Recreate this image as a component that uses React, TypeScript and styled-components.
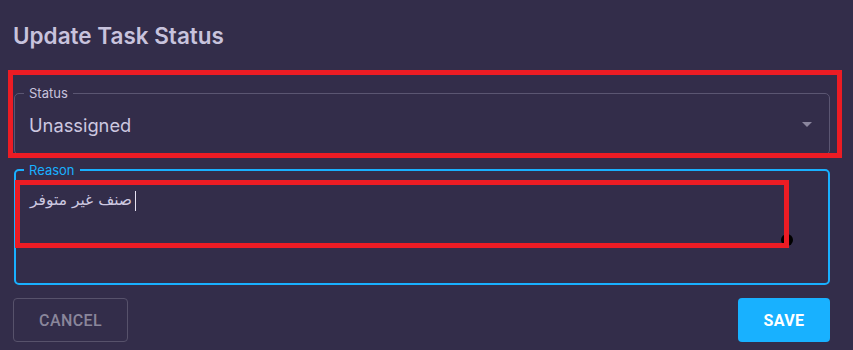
import React from "react";
import styled, { createGlobalStyle } from "styled-components";

const GlobalStyle = createGlobalStyle`
    html, body {
        margin: 0;
        padding: 0;
        background: #332d4a;
    }
    body {
        font-family: Inter, "Noto Sans", sans-serif;
    }
`;

/*
lv 0 dialog
*/
const Dialog = styled.div`
    position: relative;
    box-sizing: border-box;
    width: 853px;
    height: 350px;
    padding: 21px 23px 0 14px;
    background: #332d4a;
`;

const Title = styled.h2`
    margin: 0 0 0 -1px;
    font-size: 22.5px;
    line-height: 30px;
    font-weight: 600;
    color: #c8c3dd;
`;

/*
lv 1 fields
*/
const Field = styled.fieldset<{ $focused?: boolean; $height: number; $top: number }>`
    box-sizing: border-box;
    margin: ${(p) => p.$top}px 0 0 0;
    padding: 0 14px;
    min-width: 0;
    height: ${(p) => p.$height}px;
    border: ${(p) => (p.$focused ? "2px solid #19b0ff" : "1px solid #5b5672")};
    border-radius: 5px;
    display: flex;
    align-items: ${(p) => (p.$focused ? "flex-start" : "center")};
    position: relative;
`;

const Legend = styled.legend<{ $focused?: boolean }>`
    padding: 0 5px;
    margin-left: ${(p) => (p.$focused ? "-6px" : "-5px")};
    font-size: 13px;
    line-height: 14px;
    color: ${(p) => (p.$focused ? "#19b0ff" : "#c8c3dd")};
`;

const Value = styled.div`
    flex: 1;
    font-size: 18.3px;
    color: #cdc8e0;
    margin-top: -5px;
`;

const Arrow = styled.svg`
    width: 24px;
    height: 24px;
    margin-right: -4px;
    margin-top: -6px;
    fill: #8b869e;
`;

const ReasonText = styled.div`
    padding-top: 13px;
    font-family: "DejaVu Sans", "Noto Sans", sans-serif;
    font-size: 15.5px;
    line-height: 20px;
    color: #cdc8e0;
`;

const Caret = styled.span`
    display: inline-block;
    width: 1px;
    height: 20px;
    margin-left: 3px;
    vertical-align: middle;
    background: #e6e2f2;
`;

/*
lv 1 actions
*/
const Actions = styled.div`
    display: flex;
    justify-content: space-between;
    margin: 13px 0 0 -1px;
`;

const Button = styled.button<{ $primary?: boolean }>`
    box-sizing: border-box;
    height: 44px;
    padding: 0 24px;
    min-width: ${(p) => (p.$primary ? "92px" : "115px")};
    border-radius: 4px;
    border: ${(p) => (p.$primary ? "none" : "1px solid #57526b")};
    background: ${(p) => (p.$primary ? "#18b1ff" : "transparent")};
    color: ${(p) => (p.$primary ? "#ffffff" : "#8a869b")};
    font-family: Roboto, "Liberation Sans", sans-serif;
    font-size: 16px;
    font-weight: ${(p) => (p.$primary ? 700 : 500)};
    letter-spacing: 0.4px;
`;

/*
annotations lying over the form
*/
const Mark = styled.div<{ $x: number; $y: number; $w: number; $h: number }>`
    position: absolute;
    left: ${(p) => p.$x}px;
    top: ${(p) => p.$y}px;
    width: ${(p) => p.$w}px;
    height: ${(p) => p.$h}px;
    box-sizing: border-box;
    border: 5px solid #ec1c24;
    pointer-events: none;
`;

const Dot = styled.div`
    position: absolute;
    left: 781px;
    top: 234px;
    width: 12px;
    height: 12px;
    border-radius: 50%;
    background: #000;
`;

export default function App() {
    return (
        <>
            <GlobalStyle />
            <Dialog>
                <Title>Update Task Status</Title>
                <Field $height={69} $top={35}>
                    <Legend>Status</Legend>
                    <Value>Unassigned</Value>
                    <Arrow viewBox="0 0 24 24">
                        <path d="M7 10l5 5 5-5z" />
                    </Arrow>
                </Field>
                <Field $focused $height={122} $top={8}>
                    <Legend $focused>Reason</Legend>
                    <ReasonText>
                        صنف غير متوفر
                        <Caret />
                    </ReasonText>
                </Field>
                <Actions>
                    <Button>CANCEL</Button>
                    <Button $primary>SAVE</Button>
                </Actions>
                <Mark $x={8} $y={70} $w={834} $h={88} />
                <Dot />
                <Mark $x={15} $y={180} $w={774} $h={68} />
            </Dialog>
        </>
    );
}
